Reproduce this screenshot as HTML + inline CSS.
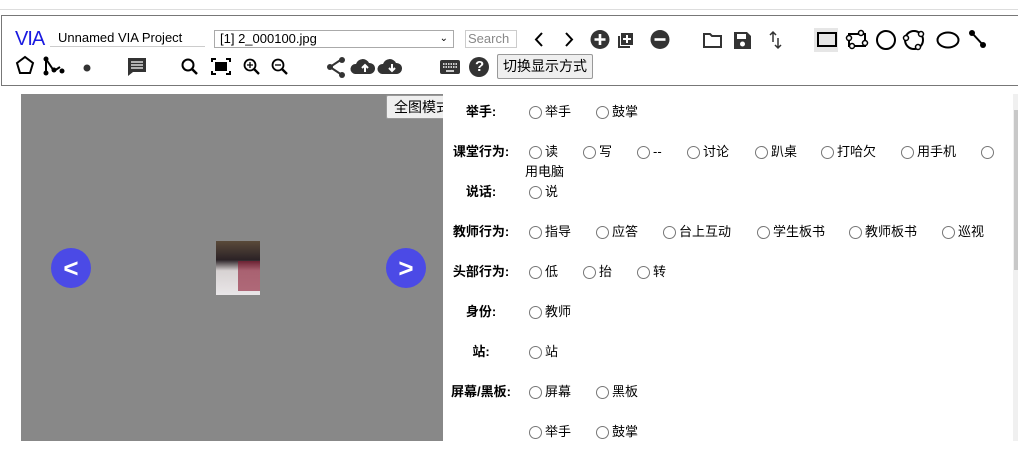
<!DOCTYPE html>
<html><head><meta charset="utf-8"><style>
body{margin:0;width:1018px;height:465px;background:#fff;position:relative;overflow:hidden;font-family:"Liberation Sans","Noto Sans CJK SC",sans-serif;font-size:13px;color:#000}
.a{position:absolute}
.ic{position:absolute}
.r{position:absolute;width:11px;height:11px;border:1px solid #777;border-radius:50%;background:#fff}
.t{position:absolute;font-size:13px;line-height:16px;white-space:nowrap}
.l{position:absolute;font-weight:bold;font-size:13px;line-height:16px;width:76px;text-align:center;left:443px;white-space:nowrap}
</style></head><body>
<div class="a" style="left:0;top:9px;width:1018px;height:1px;background:#ddd"></div>
<div class="a" style="left:1px;top:15px;width:1030px;height:69px;border:1px solid #777"></div>
<div class="a" style="left:15px;top:28px;font-size:20px;color:#1a1ae0;letter-spacing:-1px">VIA</div>
<div class="a" style="left:50px;top:29px;width:155px;height:18px;border-bottom:1px solid #ccc;font-size:13px;padding-left:8px;box-sizing:border-box;line-height:18px">Unnamed VIA Project</div>
<div class="a" style="left:214px;top:30px;width:240px;height:18px;border:1px solid #aaa;box-sizing:border-box;font-size:13px;line-height:16px;padding-left:5px">[1] 2_000100.jpg<span style="position:absolute;right:5px;top:0;font-size:10px">&#x2304;</span></div>
<div class="a" style="left:465px;top:30px;width:52px;height:18px;border:1px solid #ccc;box-sizing:border-box;color:#888;font-size:13px;line-height:16px;padding-left:2px">Search</div>
<svg class="ic" style="left:528px;top:28px" width="480" height="24">
<path d="M14 5 L8 11.5 L14 18" stroke="#000" stroke-width="2" fill="none"/>
<path d="M38 5 L44 11.5 L38 18" stroke="#000" stroke-width="2" fill="none"/>
<circle cx="72" cy="11.5" r="9.5" fill="#333"/><path d="M72 6v11M66.5 11.5h11" stroke="#fff" stroke-width="2.6"/>
<rect x="93" y="5" width="12" height="12" fill="#333"/><path d="M91 8v11h11" stroke="#333" stroke-width="2" fill="none"/><path d="M99 7v8M95 11h8" stroke="#fff" stroke-width="2"/>
<circle cx="132" cy="11.5" r="9.5" fill="#333"/><path d="M126.5 11.5h11" stroke="#fff" stroke-width="2.6"/>
<path d="M176 6h6l2 2h9v11h-17z" stroke="#333" stroke-width="2" fill="none"/>
<path d="M206 4h13l4 4v13h-17z" fill="#333"/><rect x="209" y="6" width="9" height="5" fill="#fff"/><circle cx="214.5" cy="16" r="2.5" fill="#fff"/>
<path d="M245 4v10M242 7l3-3 3 3M250 20v-10M247 17l3 3 3-3" stroke="#333" stroke-width="1.5" fill="none"/>
<rect x="286" y="0" width="24" height="24" fill="#e6e6e6"/><rect x="290" y="5" width="18" height="13" stroke="#000" stroke-width="2" fill="none"/>
<path d="M321 6h16v12h-16z" stroke="#000" stroke-width="2" fill="none"/><g fill="#fff" stroke="#000" stroke-width="1.5"><circle cx="321" cy="10" r="2.5"/><circle cx="333" cy="5" r="2.5"/><circle cx="337" cy="15" r="2.5"/><circle cx="324" cy="18" r="2.5"/></g>
<circle cx="358" cy="12" r="9" stroke="#000" stroke-width="2" fill="none"/>
<circle cx="386" cy="12" r="9" stroke="#000" stroke-width="2" fill="none"/><g fill="#fff" stroke="#000" stroke-width="1.5"><circle cx="378" cy="10" r="2.5"/><circle cx="393" cy="6" r="2.5"/><circle cx="390" cy="19" r="2.5"/></g>
<ellipse cx="420" cy="12" rx="10.5" ry="7.5" stroke="#000" stroke-width="2" fill="none"/>
<path d="M444 5L455 17" stroke="#000" stroke-width="2"/><circle cx="444" cy="5" r="3"/><circle cx="455" cy="17" r="3"/>
</svg>
<svg class="ic" style="left:12px;top:55px" width="485" height="26">
<path d="M5 8l8-6 8 6-3 10h-10z" stroke="#000" stroke-width="2" fill="none"/>
<path d="M34 4v14M34 4l8 12 6-4" stroke="#000" stroke-width="2" fill="none"/><circle cx="34" cy="4" r="2.5"/><circle cx="34" cy="18" r="2.5"/><circle cx="42" cy="15" r="2.5"/><circle cx="50" cy="16" r="2.5"/>
<circle cx="75" cy="13" r="3.5" fill="#333"/>
<path d="M116 3h18v14h-13l-5 4z" fill="#333"/><path d="M119 7h12M119 10h12M119 13h12" stroke="#fff" stroke-width="1.3"/>
<circle cx="176" cy="10" r="5.5" stroke="#000" stroke-width="2" fill="none"/><path d="M180 14l5 5" stroke="#000" stroke-width="2.5"/>
<path d="M200 7v-3h4M214 4h4v3M218 16v3h-4M204 19h-4v-3" stroke="#000" stroke-width="2" fill="none"/><rect x="203" y="7" width="12" height="9" fill="#000"/>
<circle cx="238" cy="10" r="5.5" stroke="#000" stroke-width="1.8" fill="none"/><path d="M242 14l5 5" stroke="#000" stroke-width="2.3"/><path d="M238 7v6M235 10h6" stroke="#000" stroke-width="1.3"/>
<circle cx="266" cy="10" r="5.5" stroke="#000" stroke-width="1.8" fill="none"/><path d="M270 14l5 5" stroke="#000" stroke-width="2.3"/><path d="M263 10h6" stroke="#000" stroke-width="1.3"/>
<path d="M330 4L318 12L330 20" stroke="#333" stroke-width="2" fill="none"/><circle cx="330" cy="5" r="3" fill="#333"/><circle cx="318" cy="12" r="3" fill="#333"/><circle cx="330" cy="20" r="3" fill="#333"/>
<path d="M343 19a5 5 0 0 1 1-10a7 7 0 0 1 13-1a5.5 5.5 0 0 1 1 11z" fill="#333"/><path d="M353 17v-6M350 13l3-3 3 3" stroke="#fff" stroke-width="2" fill="none"/>
<path d="M370 19a5 5 0 0 1 1-10a7 7 0 0 1 13-1a5.5 5.5 0 0 1 1 11z" fill="#333"/><path d="M380 9v6M377 13l3 3 3-3" stroke="#fff" stroke-width="2" fill="none"/>
<rect x="428" y="5" width="20" height="14" rx="2" fill="#333"/><path d="M431 9h14M431 12h14" stroke="#fff" stroke-width="1.5" stroke-dasharray="1.5 1"/><path d="M434 16h8" stroke="#fff" stroke-width="1.5"/>
<circle cx="467" cy="12" r="10" fill="#333"/>
</svg>
<div class="a" style="left:475px;top:58px;color:#fff;font-weight:bold;font-size:15px">?</div>
<div class="a" style="left:497px;top:54px;width:96px;height:25px;border:1px solid #999;border-radius:2px;background:#efefef;box-sizing:border-box;font-size:14px;line-height:23px;text-align:center">切换显示方式</div>

<div class="a" style="left:21px;top:94px;width:433px;height:347px;background:#888"></div>
<div class="a" style="left:386px;top:95px;width:70px;height:24px;border:1px solid #999;border-radius:2px;background:#efefef;font-size:14px;line-height:22px;padding-left:7px;box-sizing:border-box;overflow:hidden;white-space:nowrap">全图模式</div>
<div class="a" style="left:51px;top:248px;width:40px;height:40px;border-radius:50%;background:#4b4ae6;color:#fff;font-weight:bold;font-size:26px;text-align:center;line-height:40px">&lt;</div>
<div class="a" style="left:386px;top:248px;width:40px;height:40px;border-radius:50%;background:#4b4ae6;color:#fff;font-weight:bold;font-size:26px;text-align:center;line-height:40px">&gt;</div>
<div class="a" style="left:216px;top:241px;width:44px;height:54px;background:linear-gradient(180deg,#5a4a3a 0%,#2b2226 35%,#d7d2d2 55%,#e9e6e8 100%)"><div style="position:absolute;left:22px;top:20px;width:22px;height:30px;background:#8b1830;opacity:.6"></div></div>

<div class="a" style="left:443px;top:94px;width:570px;height:347px;background:#fff"></div>
<div class="a" style="left:1013px;top:94px;width:5px;height:347px;background:#f0f0f0"></div>
<div class="a" style="left:1014px;top:110px;width:4px;height:160px;background:#c8c8c8"></div>

<div class="l" style="top:104px">举手:</div>
<div class="r" style="left:529px;top:106px"></div><div class="t" style="left:545px;top:104px">举手</div>
<div class="r" style="left:596px;top:106px"></div><div class="t" style="left:612px;top:104px">鼓掌</div>

<div class="l" style="top:144px">课堂行为:</div>
<div class="r" style="left:529px;top:146px"></div><div class="t" style="left:545px;top:144px">读</div>
<div class="r" style="left:583px;top:146px"></div><div class="t" style="left:599px;top:144px">写</div>
<div class="r" style="left:637px;top:146px"></div><div class="t" style="left:653px;top:144px">--</div>
<div class="r" style="left:687px;top:146px"></div><div class="t" style="left:703px;top:144px">讨论</div>
<div class="r" style="left:755px;top:146px"></div><div class="t" style="left:771px;top:144px">趴桌</div>
<div class="r" style="left:821px;top:146px"></div><div class="t" style="left:837px;top:144px">打哈欠</div>
<div class="r" style="left:901px;top:146px"></div><div class="t" style="left:917px;top:144px">用手机</div>
<div class="r" style="left:981px;top:146px"></div>
<div class="t" style="left:525px;top:164px">用电脑</div>

<div class="l" style="top:184px">说话:</div>
<div class="r" style="left:529px;top:186px"></div><div class="t" style="left:545px;top:184px">说</div>

<div class="l" style="top:224px">教师行为:</div>
<div class="r" style="left:529px;top:226px"></div><div class="t" style="left:545px;top:224px">指导</div>
<div class="r" style="left:596px;top:226px"></div><div class="t" style="left:612px;top:224px">应答</div>
<div class="r" style="left:663px;top:226px"></div><div class="t" style="left:679px;top:224px">台上互动</div>
<div class="r" style="left:757px;top:226px"></div><div class="t" style="left:773px;top:224px">学生板书</div>
<div class="r" style="left:849px;top:226px"></div><div class="t" style="left:865px;top:224px">教师板书</div>
<div class="r" style="left:942px;top:226px"></div><div class="t" style="left:958px;top:224px">巡视</div>

<div class="l" style="top:264px">头部行为:</div>
<div class="r" style="left:529px;top:266px"></div><div class="t" style="left:545px;top:264px">低</div>
<div class="r" style="left:583px;top:266px"></div><div class="t" style="left:599px;top:264px">抬</div>
<div class="r" style="left:637px;top:266px"></div><div class="t" style="left:653px;top:264px">转</div>

<div class="l" style="top:304px">身份:</div>
<div class="r" style="left:529px;top:306px"></div><div class="t" style="left:545px;top:304px">教师</div>

<div class="l" style="top:344px">站:</div>
<div class="r" style="left:529px;top:346px"></div><div class="t" style="left:545px;top:344px">站</div>

<div class="l" style="top:384px">屏幕/黑板:</div>
<div class="r" style="left:529px;top:386px"></div><div class="t" style="left:545px;top:384px">屏幕</div>
<div class="r" style="left:596px;top:386px"></div><div class="t" style="left:612px;top:384px">黑板</div>

<div class="r" style="left:529px;top:426px"></div><div class="t" style="left:545px;top:424px">举手</div>
<div class="r" style="left:596px;top:426px"></div><div class="t" style="left:612px;top:424px">鼓掌</div>
<div class="a" style="left:443px;top:441px;width:575px;height:24px;background:#fff"></div>
</body></html>
